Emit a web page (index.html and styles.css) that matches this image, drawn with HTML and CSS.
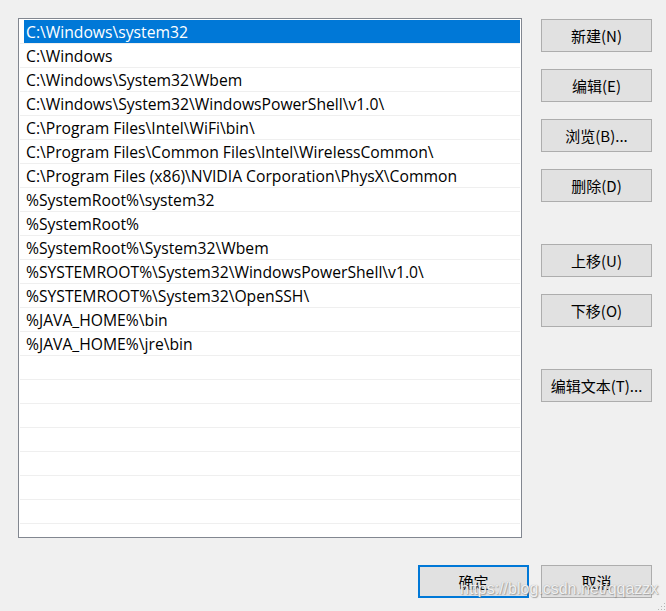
FILE: index.html
```html
<!DOCTYPE html>
<html lang="zh-CN">
<head>
<meta charset="utf-8">
<title>编辑环境变量</title>
<link rel="stylesheet" href="styles.css">
</head>
<body>
<div class="dialog">
  <div class="main">
    <div class="listbox">
      <div class="row selected"><span class="cell">C:\Windows\system32</span></div>
      <div class="row"><span class="cell">C:\Windows</span></div>
      <div class="row"><span class="cell">C:\Windows\System32\Wbem</span></div>
      <div class="row"><span class="cell">C:\Windows\System32\WindowsPowerShell\v1.0\</span></div>
      <div class="row"><span class="cell">C:\Program Files\Intel\WiFi\bin\</span></div>
      <div class="row"><span class="cell">C:\Program Files\Common Files\Intel\WirelessCommon\</span></div>
      <div class="row"><span class="cell">C:\Program Files (x86)\NVIDIA Corporation\PhysX\Common</span></div>
      <div class="row"><span class="cell">%SystemRoot%\system32</span></div>
      <div class="row"><span class="cell">%SystemRoot%</span></div>
      <div class="row"><span class="cell">%SystemRoot%\System32\Wbem</span></div>
      <div class="row"><span class="cell">%SYSTEMROOT%\System32\WindowsPowerShell\v1.0\</span></div>
      <div class="row"><span class="cell">%SYSTEMROOT%\System32\OpenSSH\</span></div>
      <div class="row"><span class="cell">%JAVA_HOME%\bin</span></div>
      <div class="row"><span class="cell">%JAVA_HOME%\jre\bin</span></div>
      <div class="row"></div>
      <div class="row"></div>
      <div class="row"></div>
      <div class="row"></div>
      <div class="row"></div>
      <div class="row"></div>
      <div class="row"></div>
      <div class="row"></div>
    </div>
    <div class="side">
      <div class="group">
        <button class="btn">新建(N)</button>
        <button class="btn">编辑(E)</button>
        <button class="btn">浏览(B)...</button>
        <button class="btn">删除(D)</button>
      </div>
      <div class="group">
        <button class="btn">上移(U)</button>
        <button class="btn">下移(O)</button>
      </div>
      <div class="group">
        <button class="btn">编辑文本(T)...</button>
      </div>
    </div>
  </div>
  <div class="footer">
    <button class="btn default">确定</button>
    <button class="btn">取消</button>
  </div>
  <div class="watermark">https://blog.csdn.net/qqazzx</div>
  <div class="grip"></div>
</div>
</body>
</html>
```

FILE: styles.css
```css
html, body {
  margin: 0;
  padding: 0;
  background: #f0f0f0;
}
body {
  font-family: "Open Sans", "Noto Sans CJK SC", sans-serif;
  font-size: 15.7px;
  color: #000;
}
.dialog {
  position: relative;
  width: 666px;
  height: 611px;
  overflow: hidden;
}
.main {
  display: flex;
  padding: 18px 0 0 18px;
}
.listbox {
  border: 1px solid #828790;
  background: #fff;
  padding: 1px;
  box-sizing: content-box;
  width: 500px;
  height: 516px;
  overflow: hidden;
}
.row {
  height: 23px;
  border-bottom: 1px solid #efefef;
  display: flex;
  padding-left: 4px;
}
.cell {
  flex: 1;
  line-height: 24px;
  height: 23px;
  padding-left: 2px;
  white-space: nowrap;
}
.row.selected .cell {
  background: #0078d7;
  color: #fff;
}
.side {
  margin-left: 19px;
  margin-top: 1px;
  display: flex;
  flex-direction: column;
  gap: 42px;
}
.group {
  display: flex;
  flex-direction: column;
  gap: 17px;
}
.btn {
  width: 111px;
  height: 33px;
  margin: 0;
  padding: 0;
  background: #e1e1e1;
  border: 1px solid #adadad;
  font-family: "Noto Sans CJK SC", "Open Sans", sans-serif;
  font-size: 15px;
  color: #000;
  line-height: 30px;
  text-align: center;
}
.footer {
  display: flex;
  justify-content: flex-end;
  gap: 12px;
  padding: 27px 14px 0 0;
}
.btn.default {
  border: 2px solid #0078d7;
  line-height: 28px;
}
.watermark {
  position: absolute;
  left: 460px;
  top: 580px;
  font-family: "Liberation Sans", sans-serif;
  font-size: 16px;
  color: rgba(255, 255, 255, 0.85);
  text-shadow: 0 0 1px #9a9a9a, 1px 1px 1px rgba(120, 120, 120, 0.6);
  white-space: nowrap;
}
.grip {
  position: absolute;
  right: 1px;
  bottom: 1px;
  width: 8px;
  height: 8px;
  background:
    radial-gradient(circle, #b4b4b4 0.8px, transparent 1px) 0 0 / 3px 3px;
  clip-path: polygon(100% 0, 100% 100%, 0 100%);
}
```
